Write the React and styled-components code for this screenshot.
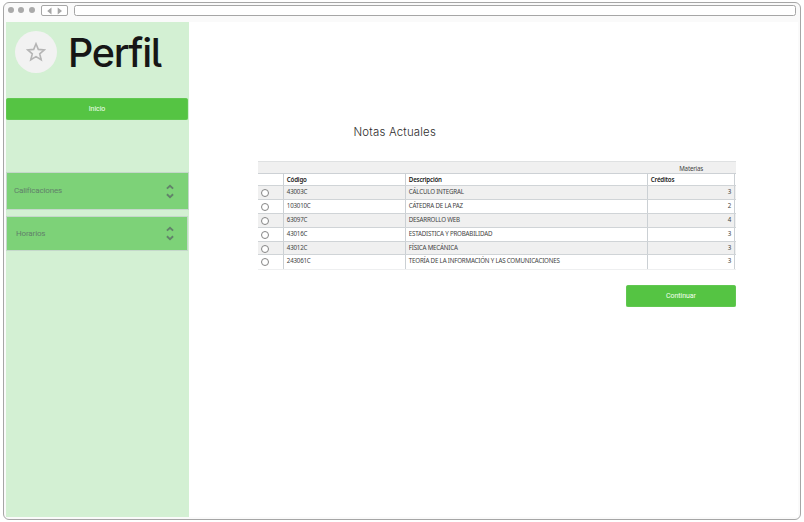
import React from "react";
import styled, { createGlobalStyle } from "styled-components";

const Global = createGlobalStyle`
  * { box-sizing: border-box; }
  html, body { margin: 0; background: #fff; }
  body { overflow: hidden; }
  button { font: inherit; border: 0; padding: 0; }
`;

const Page = styled.div`
  width: 804px;
  height: 522px;
  padding: 2px 3px;
  background: #fff;
`;
const Browser = styled.div`
  display: flex;
  flex-direction: column;
  width: 798px;
  height: 518px;
  padding: 0 2px 2px;
  border: 1px solid #a6a6a6;
  border-radius: 6px;
  background: #fafafa;
`;
const Chrome = styled.header`
  display: flex;
  align-items: flex-start;
  height: 19px;
  padding: 2px 2px 0 2px;
`;
const Dots = styled.div`
  display: flex;
  gap: 4.3px;
  width: 33px;
  padding-top: 2px;
`;
const Dot = styled.i`
  width: 6px;
  height: 6px;
  border-radius: 50%;
  background: #aaa;
`;
const NavButtons = styled.div`
  display: flex;
  justify-content: center;
  align-items: center;
  width: 27px;
  height: 11px;
  border: 1px solid #a6a6a6;
  border-radius: 2px;
  background: #fff;
`;
const AddressBar = styled.div`
  flex: 1;
  height: 11px;
  margin-left: 6px;
  border: 1px solid #a6a6a6;
  border-radius: 2.5px;
  background: #fff;
`;
const Body = styled.div`
  display: flex;
  flex: 1;
  min-height: 0;
  background: #fff;
`;
const Sidebar = styled.aside`
  width: 183px;
  background: #d3f0d3;
`;
const Profile = styled.div`
  display: flex;
  height: 76px;
  padding: 9px 0 0 9px;
`;
const Avatar = styled.div`
  display: grid;
  place-items: center;
  width: 42px;
  height: 42px;
  border-radius: 50%;
  background: #f2f2f2;
`;
const Name = styled.h1`
  margin: -1px 0 0 11px;
  font: 500 39.5px/46px Inter, sans-serif;
  font-feature-settings: "cv05" 1;
  letter-spacing: -1.3px;
  color: #161616;
`;
const Button = styled.button`
  display: grid;
  place-items: center;
  width: ${(p) => p.$width}px;
  height: 22px;
  border-radius: 2.5px;
  background: #55c443;
  color: #f3fff0;
  font: 7px/10px Roboto, sans-serif;
  letter-spacing: -0.05px;
  box-shadow: inset 0 0 0 0.5px #6fcb61;
`;
const Menu = styled.nav`
  display: flex;
  flex-direction: column;
  gap: 6px;
  padding-top: 52px;
`;
const MenuItem = styled.div`
  display: flex;
  align-items: center;
  justify-content: space-between;
  height: ${(p) => (p.$inset ? 35 : 38)}px;
  width: ${(p) => (p.$inset ? 182 : 183)}px;
  padding: 0 ${(p) => (p.$inset ? 12 : 13)}px 0 ${(p) => (p.$inset ? 9 : 7)}px;
  border: 1px solid #c5d8cb;
  background: #7dd278;
  color: #61816a;
  font: 8px/10px Roboto, sans-serif;
  letter-spacing: -0.15px;
`;
const Main = styled.main`
  width: 547px;
  padding: 101px 0 0 69px;
`;
const Title = styled.h2`
  margin: 0 0 0 95.5px;
  font: 300 11.4px/18px Inter, sans-serif;
  letter-spacing: 0.2px;
  color: #2c2c2c;
`;
const Table = styled.section`
  margin-top: 20px;
  border-top: 1px solid #dfe1e2;
  font: 6.2px/8px "Noto Sans", sans-serif;
  letter-spacing: -0.2px;
  color: #444;
`;
const Group = styled.div`
  height: 12px;
  padding: 3px 33px 0 0;
  border-bottom: 1px solid #cdd1d5;
  background: #f0f0f0;
  text-align: right;
`;
const Row = styled.div`
  display: grid;
  grid-template-columns: 25px 122px 242px 87px 2px;
  height: ${(p) => p.$height}px;
  border-bottom: 1px solid ${(p) => (p.$last ? "#eeeff0" : "#d0d4d7")};
  background: ${(p) => (p.$shaded ? "#f0f0f0" : "#fff")};
  font-weight: ${(p) => (p.$head ? 600 : 400)};
  color: ${(p) => (p.$head ? "#222" : "#444")};
`;
const Cell = styled.div`
  padding: ${(p) => (p.$head ? 2 : 1.5)}px 3px 0 2.8px;
  border-left: ${(p) => (p.$first ? 0 : 1)}px solid #cbd0d4;
  text-align: ${(p) => (p.$right ? "right" : "left")};
  white-space: nowrap;
`;
const Radio = styled.i`
  display: block;
  width: 8px;
  height: 8px;
  margin-top: 1px;
  border: 1px solid #858585;
  border-radius: 50%;
  background: #fff;
`;
const Actions = styled.div`
  display: flex;
  justify-content: flex-end;
  padding-top: 15px;
`;

const Chevrons = () => (
  <svg width="10" height="17" viewBox="0 0 10 17" fill="none" stroke="#62826a" strokeWidth="1.9">
    <path d="M1.9 5.6 5 2.8l3.1 2.8M1.9 11.3 5 14.1l3.1-2.8" />
  </svg>
);

const subjects = [
  ["43003C", "CÁLCULO INTEGRAL", 3, 14],
  ["103010C", "CÁTEDRA DE LA PAZ", 2, 14],
  ["63097C", "DESARROLLO WEB", 4, 14],
  ["43016C", "ESTADISTICA Y PROBABILIDAD", 3, 14],
  ["43012C", "FÍSICA MECÁNICA", 3, 13],
  ["243061C", "TEORÍA DE LA INFORMACIÓN Y LAS COMUNICACIONES", 3, 15],
];

export default function App() {
  return (
    <Page>
      <Global />
      <Browser>
        <Chrome>
          <Dots><Dot /><Dot /><Dot /></Dots>
          <NavButtons>
            <svg width="17" height="8" viewBox="0 0 17 8" fill="#a6a6a6">
              <path d="M5.5.5v7L1.2 4zM11.7.5v7L16 4z" />
            </svg>
          </NavButtons>
          <AddressBar />
        </Chrome>
        <Body>
          <Sidebar>
            <Profile>
              <Avatar>
                <svg width="20" height="20" viewBox="0 0 20 20" fill="none" stroke="#b5b5b5" strokeWidth="1.6">
                  <path d="m10 1.8 2.3 5.6 6 .5-4.6 3.9 1.5 6-5.2-3.2-5.2 3.2 1.5-6-4.6-3.9 6-.5z" />
                </svg>
              </Avatar>
              <Name>Perfil</Name>
            </Profile>
            <Button $width={182}>Inicio</Button>
            <Menu>
              <MenuItem>Calificaciones<Chevrons /></MenuItem>
              <MenuItem $inset>Horarios<Chevrons /></MenuItem>
            </Menu>
          </Sidebar>
          <Main>
            <Title>Notas Actuales</Title>
            <Table>
              <Group>Materias</Group>
              <Row $head $height={12}>
                <Cell $first />
                <Cell $head>Código</Cell>
                <Cell $head>Descripción</Cell>
                <Cell $head>Créditos</Cell>
                <Cell />
              </Row>
              {subjects.map(([code, name, credits, height], i) => (
                <Row key={code} $height={height} $shaded={i % 2 === 0} $last={i === 5}>
                  <Cell $first><Radio /></Cell>
                  <Cell>{code}</Cell>
                  <Cell>{name}</Cell>
                  <Cell $right>{credits}</Cell>
                  <Cell />
                </Row>
              ))}
            </Table>
            <Actions><Button $width={110}>Continuar</Button></Actions>
          </Main>
        </Body>
      </Browser>
    </Page>
  );
}
